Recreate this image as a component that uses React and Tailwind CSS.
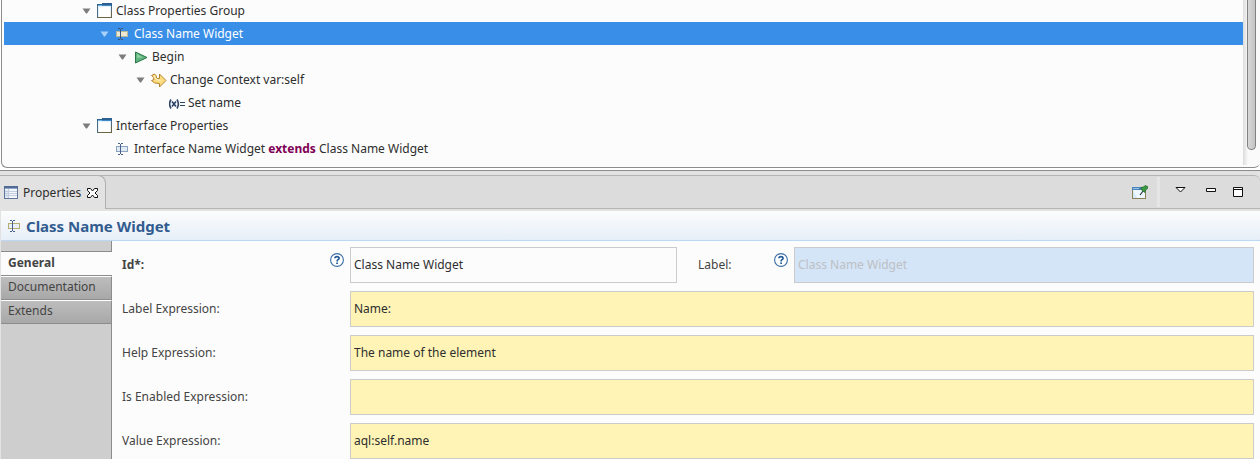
import React from "react";

function GroupIcon() {
  return (
    <svg width="16" height="16" viewBox="0 0 16 16" shapeRendering="crispEdges" className="shrink-0">
      <rect x="0.5" y="1.5" width="14" height="13" fill="#fff" stroke="#6b6445" />
      <path d="M0.5 15V3M14.5 8V3" stroke="#4f6a84" />
      <path d="M0 1h5V0h10v3H0z" fill="#2c6091" />
      <path d="M1 2h4v1H1z" fill="#6fb2e6" />
      <path d="M5 2h9v1H5z" fill="#4389c6" />
      <rect x="1" y="3" width="13" height="11" fill="#e3f1fb" />
      <rect x="2" y="4" width="11" height="10" fill="#fff" />
    </svg>
  );
}

function FieldIcon({ fill = "#dfeaf6", stroke = "#8da3bd", bar = "#465f8c" }) {
  return (
    <svg width="16" height="16" viewBox="0 0 16 16" shapeRendering="crispEdges" className="shrink-0">
      <rect x="1.5" y="5.5" width="11" height="5" fill={fill} stroke={stroke} />
      <path d="M3 2.5h2M6 2.5h2M3 13.5h2M6 13.5h2M5.5 3v10" stroke={bar} fill="none" />
    </svg>
  );
}

function BeginIcon() {
  return (
    <svg width="16" height="16" viewBox="0 0 16 16" className="shrink-0">
      <path d="M2.500 3V14L14 8.500z" fill="#5fb37d" stroke="#2b7549" strokeLinejoin="round" />
      <path d="M4 5v4l6-.5z" fill="#8ccf9f" />
    </svg>
  );
}

function ContextIcon() {
  return (
    <svg width="16" height="16" viewBox="0 0 16 16" className="shrink-0">
      <path
        d="M.5 3.500 3.500 2Q6 3.500 5.500 6.500H8.500V2L15 8.500 8.500 15V11.500Q3 12 .5 8.500L3 7.500Q3 5 .5 3.500z"
        fill="#fbdc80"
        stroke="#b5832f"
        strokeLinejoin="round"
      />
      <path d="M3 4Q5 8 9.500 8.500" fill="none" stroke="#fff3c4" strokeWidth="1.200" />
    </svg>
  );
}

function SetIcon() {
  return (
    <svg width="16" height="16" viewBox="0 0 16 16" fill="none" stroke="#2a4168" strokeWidth="1.600" className="shrink-0">
      <path d="M2 4.500Q-.8 9 2 13.500M8 4.500Q10.800 9 8 13.500" />
      <path d="M3 6.500 7 11.500M7 6.500 3 11.500" />
      <path d="M11 7.500h5M11 10.500h5" strokeWidth="1.200" />
    </svg>
  );
}

function TableIcon() {
  return (
    <svg width="14" height="13" viewBox="0 0 14 13" shapeRendering="crispEdges" className="shrink-0">
      <rect x="0.5" y="0.5" width="13" height="12" fill="#f4f8fd" stroke="#60769c" />
      <path d="M0 0h14v2H0z" fill="#526a94" />
      <path d="M1 2h12v1H1z" fill="#8fa6cb" />
      <path d="M1 4h3v8H1z" fill="#dbe6f4" />
      <path d="M4.500 3v9M1 5.500h12M1 7.500h12M1 9.500h12" stroke="#c2cddd" />
    </svg>
  );
}

function CloseIcon() {
  return (
    <svg width="11" height="12" viewBox="0 0 11 12" fill="#fff" stroke="#111">
      <path d="M.5 1.500h3l2 2.500 2-2.500h3v2L8 6l2.500 2.500v2h-3L5.500 8l-2 2.500h-3v-2L3 6 .5 3.500z" />
    </svg>
  );
}

function PinIcon() {
  return (
    <svg width="16" height="15" viewBox="0 0 16 15">
      <rect x="0.5" y="2.500" width="13" height="11" fill="#d4eafb" stroke="#8b8057" />
      <path d="M1 5h12v8H5z" fill="#fff" opacity=".6" />
      <path d="M0 2h14v3H0z" fill="#4b82b8" />
      <path d="M1 3h6v1H1z" fill="#8fc0e8" />
      <path d="M8 10 11.500 5.500" stroke="#234" strokeWidth="1.200" />
      <path d="M9 2.500 11.500 2 13 .5 15.500 1.500 15.500 3.500 13.500 5 13 7.500 9.500 5z" fill="#3d9844" stroke="#24702f" strokeWidth=".8" />
    </svg>
  );
}

function HelpIcon() {
  return (
    <svg width="14" height="14" viewBox="0 0 14 14" fill="none" className="mt-1.5 shrink-0">
      <circle cx="7" cy="7" r="6.400" fill="#fff" stroke="#3a6ea5" strokeWidth="1.100" />
      <path d="M4.900 5.300Q5 3.600 7 3.600T9.100 5.300Q9.100 6.300 7.900 6.800Q7.100 7.200 7.100 8.500" stroke="#215a98" strokeWidth="1.700" />
      <path d="M6.200 9.400h1.800V11H6.200z" fill="#215a98" />
    </svg>
  );
}

function Row({ indent, icon, children, selected, leaf }) {
  return (
    <li
      role="treeitem"
      aria-selected={!!selected}
      className={`flex h-[23px] items-center ${indent} ${selected ? "bg-[#398ee7] text-white" : ""}`}
    >
      <span className="flex w-[15px] shrink-0">
        {!leaf && (
          <svg width="9" height="6" viewBox="0 0 9 6">
            <path d="M.5.5h8L5 5.500H4z" fill={selected ? "#a9d0f8" : "#7d7d7d"} />
          </svg>
        )}
      </span>
      {icon}
      <span className="ml-[3px] whitespace-pre">{children}</span>
    </li>
  );
}

const box = "h-9 w-full min-w-0 border border-[#cbcbcb] px-[3px] pb-0.5 outline-none";
const tab =
  "h-6 border-y border-r border-t-white border-r-[#8c8c8c] border-b-[#8c8c8c] bg-linear-to-b from-[#bdbdbd] to-[#a8a8a8] pb-0.5 pl-[7px] text-left";

function Expression({ id, label, value }) {
  return (
    <>
      <label htmlFor={id}>{label}</label>
      <input id={id} defaultValue={value} className={`${box} col-span-3 bg-[#fff4b5] text-[#2e2e2e]`} />
    </>
  );
}

export default function App() {
  return (
    <div className="bg-[#e2e2e2] font-['Noto_Sans',sans-serif] text-[12px] leading-4 text-[#2e2e2e]">
      <section className="border-b border-[#8c8c8c] bg-white pb-0.5">
        <div className="ml-px flex overflow-hidden rounded-b-md border-b border-l border-[#8c8c8c] bg-[#fcfcfc]">
          <ul role="tree" className="-mt-px mb-[7px] ml-0.5 flex-1">
            <Row indent="pl-[78px]" icon={<GroupIcon />}>Class Properties Group</Row>
            <Row indent="pl-24" icon={<FieldIcon fill="#ece8d2" stroke="#b8b894" bar="#3a5478" />} selected>Class Name Widget</Row>
            <Row indent="pl-[114px]" icon={<BeginIcon />}>Begin</Row>
            <Row indent="pl-[132px]" icon={<ContextIcon />}>Change Context var:self</Row>
            <Row indent="pl-[150px]" icon={<SetIcon />} leaf>Set name</Row>
            <Row indent="pl-[78px]" icon={<GroupIcon />}>Interface Properties</Row>
            <Row indent="pl-24" icon={<FieldIcon />} leaf>
              Interface Name Widget <b className="text-[#7f0055]">extends</b> Class Name Widget
            </Row>
          </ul>
          <div className="mb-0.5 flex w-[17px] justify-center bg-linear-to-r from-[#dcdcdc] to-[#fafafa] to-30%">
            <div className="mb-[15px] w-[9px] rounded-b-full border border-t-0 border-[#828282] bg-linear-to-r from-[#d8d8d8] to-[#c4c4c4]" />
          </div>
        </div>
      </section>

      <section className="pt-1">
        <header className="flex h-[34px] rounded-tr-md border-t border-[#b4b4b4] bg-[#dcdcdc]">
          <div className="-mt-px flex w-[106px] items-center gap-[5px] rounded-tr-lg border-t border-r border-[#b0b0b0] bg-[#e2e2e2] pl-1">
            <TableIcon />
            <span>Properties</span>
            <button aria-label="Close Properties" className="ml-px"><CloseIcon /></button>
          </div>
          <div className="flex flex-1 justify-end border-b border-[#b4b4b4] pr-[17px]">
            <button aria-label="Pin view" className="mr-[9px]"><PinIcon /></button>
            <span className="my-px mr-[15px] w-[3px] bg-[#e5e5e5]" />
            <button aria-label="View menu" className="mr-5 mb-1">
              <svg width="11" height="6" viewBox="0 0 11 6"><path d="M1 .5h9L5.500 5z" fill="#fff" stroke="#111" /></svg>
            </button>
            <button aria-label="Minimize" className="mr-[17px] mb-1">
              <svg width="10" height="4" viewBox="0 0 10 4"><path d="M.5.5h9v3h-9z" fill="#fff" stroke="#111" /></svg>
            </button>
            <button aria-label="Maximize">
              <svg width="10" height="10" viewBox="0 0 10 10"><path d="M.5.5h9v9h-9zM0 2.500h10" fill="#fff" stroke="#111" /></svg>
            </button>
          </div>
        </header>

        <div className="mt-0.5 ml-px">
          <h1 className="flex h-[30px] items-center gap-[3px] border-b border-[#bcd8f2] bg-linear-to-b from-[#fcfcfc] to-[#e6eff8] pl-1.5 text-[15px] font-bold text-[#325c8f]">
            <FieldIcon fill="#e7eff8" stroke="#b5ad72" />
            Class Name Widget
          </h1>
          <div className="flex">
            <nav className="flex w-[111px] shrink-0 flex-col bg-[#cecece] text-[#444]">
              <div className="h-2.5 border-r border-[#8c8c8c]" />
              <button className="h-[25px] border-y border-[#8c8c8c] bg-[#fcfcfc] pb-0.5 pl-[7px] text-left font-bold">General</button>
              <button className={tab}>Documentation</button>
              <button className={tab}>Extends</button>
              <div className="flex-1 border-r border-[#8c8c8c]" />
            </nav>
            <form className="grid flex-1 grid-cols-[228px_327fr_117px_460fr] items-center gap-y-2 bg-[#fcfcfc] pt-1.5 pr-1.5 pl-2.5 text-[#444]">
              <div className="flex h-9 justify-between pr-1.5">
                <label htmlFor="id" className="self-center font-bold">Id*:</label>
                <HelpIcon />
              </div>
              <input id="id" defaultValue="Class Name Widget" className={`${box} bg-[#fcfcfc] text-[#2e2e2e]`} />
              <div className="flex h-9 justify-between pr-1.5 pl-[21px]">
                <label htmlFor="label" className="self-center">Label:</label>
                <HelpIcon />
              </div>
              <input id="label" placeholder="Class Name Widget" className={`${box} bg-[#d4e5f7] placeholder:text-[#bdc0c4]`} />
              <Expression id="label-expression" label="Label Expression:" value="Name:" />
              <Expression id="help-expression" label="Help Expression:" value="The name of the element" />
              <Expression id="enabled-expression" label="Is Enabled Expression:" value="" />
              <Expression id="value-expression" label="Value Expression:" value="aql:self.name" />
            </form>
          </div>
        </div>
      </section>
    </div>
  );
}
